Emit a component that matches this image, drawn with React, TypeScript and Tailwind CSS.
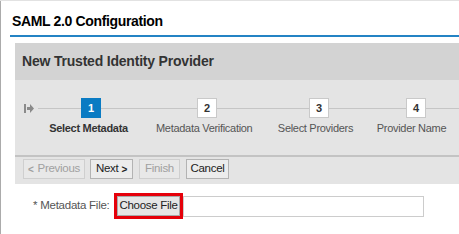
import React from 'react';

function StartIcon() {
  return (
    <svg width="10" height="9" viewBox="0 0 10 9" className="shrink-0">
      <rect x="0" y="0" width="2" height="9" fill="#8a8a8a" />
      <path d="M3 3h3V0l4 4.5L6 9V6H3z" fill="#8a8a8a" />
    </svg>
  );
}

function StepBox({ n, active }: { n: number; active?: boolean }) {
  return (
    <div
      className={
        active
          ? 'w-[20px] h-[20px] shrink-0 flex items-center justify-center bg-[#0a7bc3] text-white text-[11px] font-bold'
          : 'w-[20px] h-[20px] shrink-0 flex items-center justify-center bg-white border border-[#c9c9c9] text-[#333] text-[11px] font-bold'
      }
    >
      {n}
    </div>
  );
}

export default function App() {
  return (
    <div className="w-[459px] h-[234px] bg-white border-t border-[#e2e2e2] overflow-hidden font-['Liberation_Sans',Arial,sans-serif]">
      <div className="h-full border-l border-[#ababab]">
        {/* Title */}
        <div className="h-[34px] pt-[12px] pl-[11px] text-[14px] font-bold text-black tracking-[-0.35px] leading-[16px]">
          SAML 2.0 Configuration
        </div>
        <div className="ml-[9px] h-[2px] bg-[#2483c4]" />

        {/* Wizard panel */}
        <div className="ml-[14px] mt-[6px]">
          <div className="h-[37px] bg-[#d3d3d3] flex items-center pl-[7px] text-[14px] font-bold text-[#333] tracking-[-0.2px]">
            New Trusted Identity Provider
          </div>

          <div className="h-[75px] bg-[#e4e4e4] pt-[18px]">
            {/* Step markers */}
            <div className="flex items-center h-[20px]">
              <div className="ml-[9px] mr-[4px] flex items-center">
                <StartIcon />
              </div>
              <div className="w-[43px] h-px bg-[#c5c5c5]" />
              <StepBox n={1} active />
              <div className="w-[96px] h-px bg-[#c5c5c5]" />
              <StepBox n={2} />
              <div className="w-[92px] h-px bg-[#c5c5c5]" />
              <StepBox n={3} />
              <div className="w-[77px] h-px bg-[#c5c5c5]" />
              <StepBox n={4} />
              <div className="flex-1 h-px bg-[#c5c5c5]" />
            </div>

            {/* Step labels */}
            <div className="flex mt-[3px] text-[11px] leading-[14px] tracking-[-0.3px] whitespace-nowrap">
              <div className="ml-[26px] w-[96px] text-center font-bold text-[#333]">Select Metadata</div>
              <div className="ml-[20px] w-[96px] text-center text-[#555]">Metadata Verification</div>
              <div className="ml-[16px] w-[96px] text-center text-[#555]">Select Providers</div>
              <div className="ml-[1px] w-[96px] text-center text-[#555]">Provider Name</div>
            </div>
          </div>

          {/* Buttons */}
          <div className="h-[29px] bg-[#e4e4e4] border-t-2 border-[#c3c3c3] pt-[2px] flex items-start text-[11.5px] tracking-[-0.3px]">
            <button className="ml-[8px] h-[20px] w-[62px] border border-[#cfcfcf] bg-[#e8e8e8] text-[#a0a0a0] flex items-center justify-center gap-[4px]">
              <span className="text-[10px] font-bold">&lt;</span>
              <span>Previous</span>
            </button>
            <button className="ml-[5px] h-[20px] w-[43px] border border-[#b3b3b3] bg-[#ececec] text-[#222] flex items-center justify-center gap-[3px]">
              <span>Next</span>
              <span className="text-[10px] font-bold">&gt;</span>
            </button>
            <button className="ml-[6px] h-[20px] w-[41px] border border-[#cfcfcf] bg-[#e8e8e8] text-[#a0a0a0] flex items-center justify-center">
              Finish
            </button>
            <button className="ml-[6px] h-[20px] w-[43px] border border-[#b3b3b3] bg-[#ececec] text-[#222] flex items-center justify-center">
              Cancel
            </button>
          </div>
        </div>

        {/* Metadata file row */}
        <div className="flex items-center mt-[9px]">
          <div className="ml-[32px] w-[74px] text-[11.5px] tracking-[-0.25px] text-[#555] whitespace-nowrap">
            * Metadata File:
          </div>
          <div className="ml-[7px] border-[3px] border-[#e5000a] flex">
            <div className="h-[20px] w-[63px] bg-[#e6e6e6] border border-[#a9a9a9] flex items-center justify-center text-[11.5px] tracking-[-0.3px] text-[#222]">
              Choose File
            </div>
          </div>
          <div className="w-[241px] h-[21px] bg-white border border-[#cccccc]" />
        </div>
      </div>
    </div>
  );
}
